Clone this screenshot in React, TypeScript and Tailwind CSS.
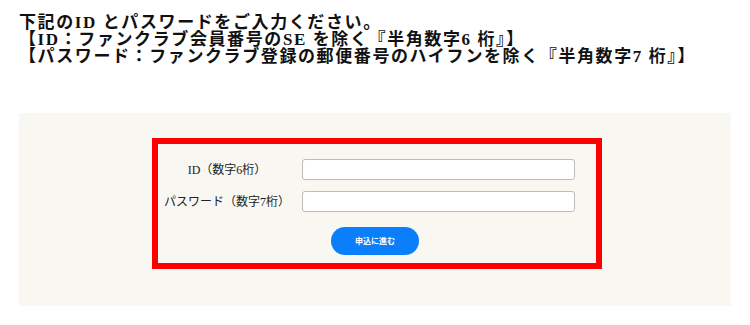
export default function App() {
  return (
    <div className="w-[750px] h-[325px] bg-white text-[#111]">
      <div
        className="pt-[14px] pl-[19px] text-[17px] leading-[17px] tracking-[1.6px] font-bold"
        style={{ fontFamily: '"Liberation Serif", "Noto Sans CJK JP", serif' }}
      >
        <p>下記のID とパスワードをご入力ください。</p>
        <p>【ID：ファンクラブ会員番号のSE を除く『半角数字6 桁』】</p>
        <p>【パスワード：ファンクラブ登録の郵便番号のハイフンを除く『半角数字7 桁』】</p>
      </div>

      <div className="mt-[48px] ml-[19px] w-[712px] h-[193px] bg-[#f8f7f2] pt-[25px]">
        <div className="ml-[133px] w-[450px] h-[131px] border-[6px] border-[#ff0000] pt-[15px]">
          <div
            className="flex flex-col gap-[11px] text-[12px] text-[#222]"
            style={{ fontFamily: '"Liberation Serif", "Noto Sans CJK JP", serif' }}
          >
            <div className="flex items-center">
              <label className="w-[138px] text-center">ID（数字6桁）</label>
              <input
                type="text"
                className="ml-[6px] w-[273px] h-[21px] bg-white border border-[#bdbdbd] rounded-[3px]"
              />
            </div>
            <div className="flex items-center">
              <label className="w-[138px] text-center">パスワード（数字7桁）</label>
              <input
                type="password"
                className="ml-[6px] w-[273px] h-[21px] bg-white border border-[#bdbdbd] rounded-[3px]"
              />
            </div>
          </div>
          <button
            className="mt-[15px] ml-[173px] w-[88px] h-[28px] rounded-full bg-[#0b7ffb] text-white text-[8px] font-bold flex items-center justify-center"
            style={{ fontFamily: '"Noto Sans CJK JP", sans-serif' }}
          >
            申込に進む
          </button>
        </div>
      </div>
    </div>
  );
}
